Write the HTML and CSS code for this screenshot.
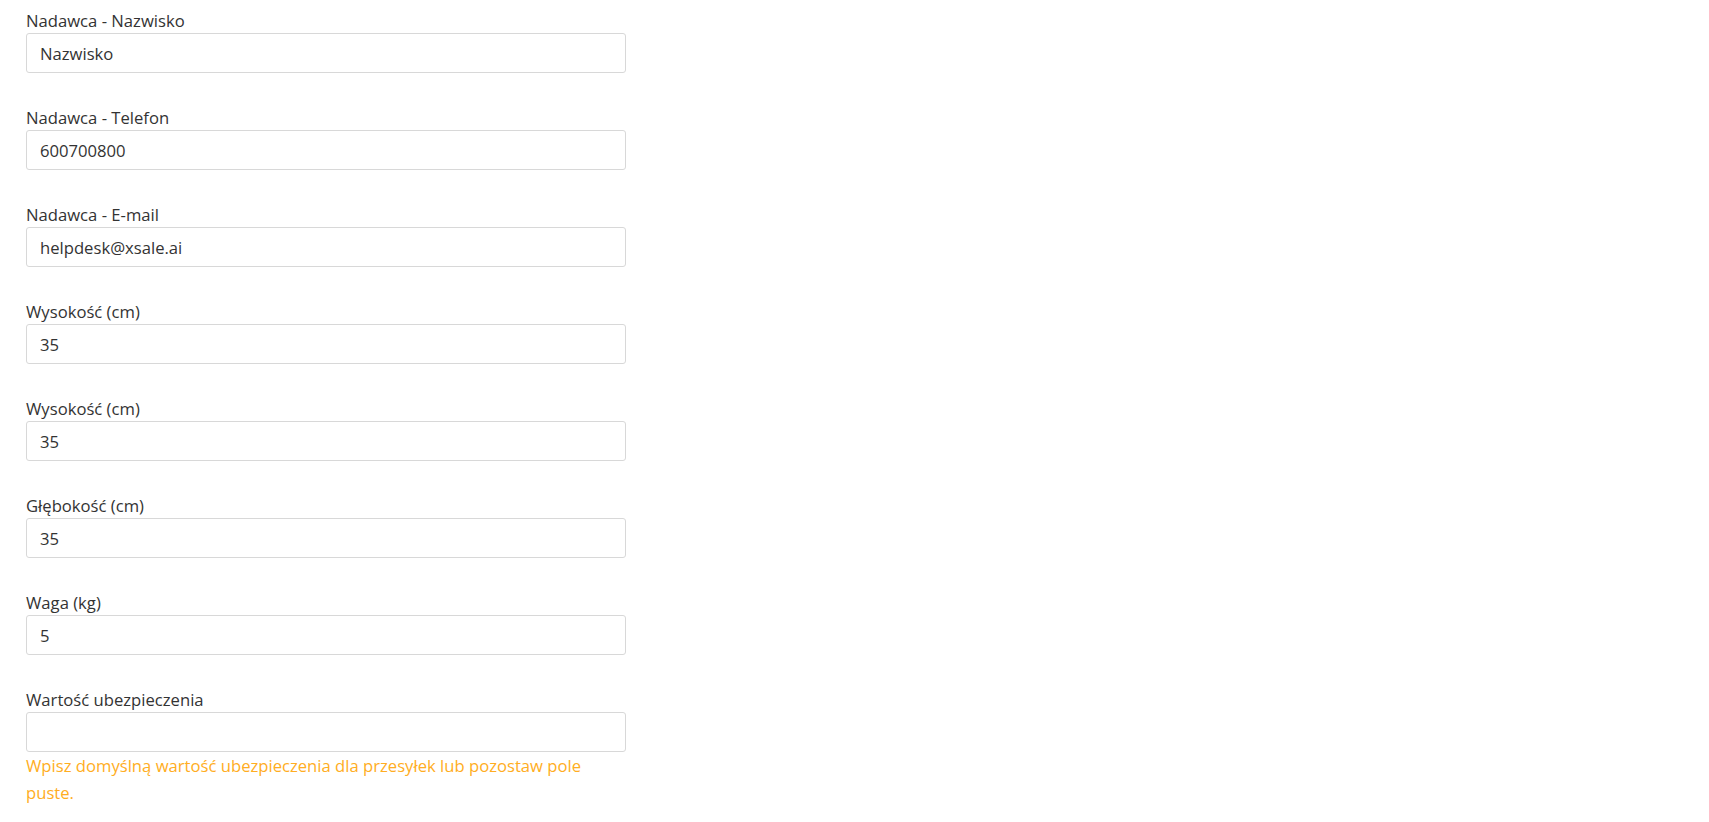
FILE: index.html
```html
<!DOCTYPE html>
<html lang="pl">
<head>
<meta charset="utf-8">
<link rel="stylesheet" href="styles.css">
</head>
<body>
<form class="form">
  <div class="group">
    <label class="label">Nadawca - Nazwisko</label>
    <input class="control" type="text" value="Nazwisko">
  </div>
  <div class="group">
    <label class="label">Nadawca - Telefon</label>
    <input class="control" type="text" value="600700800">
  </div>
  <div class="group">
    <label class="label">Nadawca - E-mail</label>
    <input class="control" type="text" value="helpdesk@xsale.ai">
  </div>
  <div class="group">
    <label class="label">Wysokość (cm)</label>
    <input class="control" type="text" value="35">
  </div>
  <div class="group">
    <label class="label">Wysokość (cm)</label>
    <input class="control" type="text" value="35">
  </div>
  <div class="group">
    <label class="label">Głębokość (cm)</label>
    <input class="control" type="text" value="35">
  </div>
  <div class="group">
    <label class="label">Waga (kg)</label>
    <input class="control" type="text" value="5">
  </div>
  <div class="group">
    <label class="label">Wartość ubezpieczenia</label>
    <input class="control" type="text" value="">
    <div class="help">Wpisz domyślną wartość ubezpieczenia dla przesyłek lub pozostaw pole puste.</div>
  </div>
</form>
</body>
</html>
```
FILE: styles.css
```css
html, body {
  margin: 0;
  padding: 0;
  background: #ffffff;
}
body {
  font-family: "Open Sans", "Noto Sans", sans-serif;
  font-size: 16.65px;
  color: #333333;
}
.form {
  width: 600px;
  padding: 9px 0 0 26px;
}
.group {
  display: flex;
  flex-direction: column;
  margin-bottom: 33px;
}
.label {
  line-height: 24px;
  color: #333333;
}
.control {
  box-sizing: border-box;
  height: 40px;
  width: 600px;
  margin: 0;
  padding: 7px 13px;
  border: 1px solid #d8d8d8;
  border-radius: 3px;
  font: inherit;
  line-height: 24px;
  color: #333333;
  background: #ffffff;
  outline: none;
}
.help {
  color: #ffad22;
  line-height: 27px;
}
```
